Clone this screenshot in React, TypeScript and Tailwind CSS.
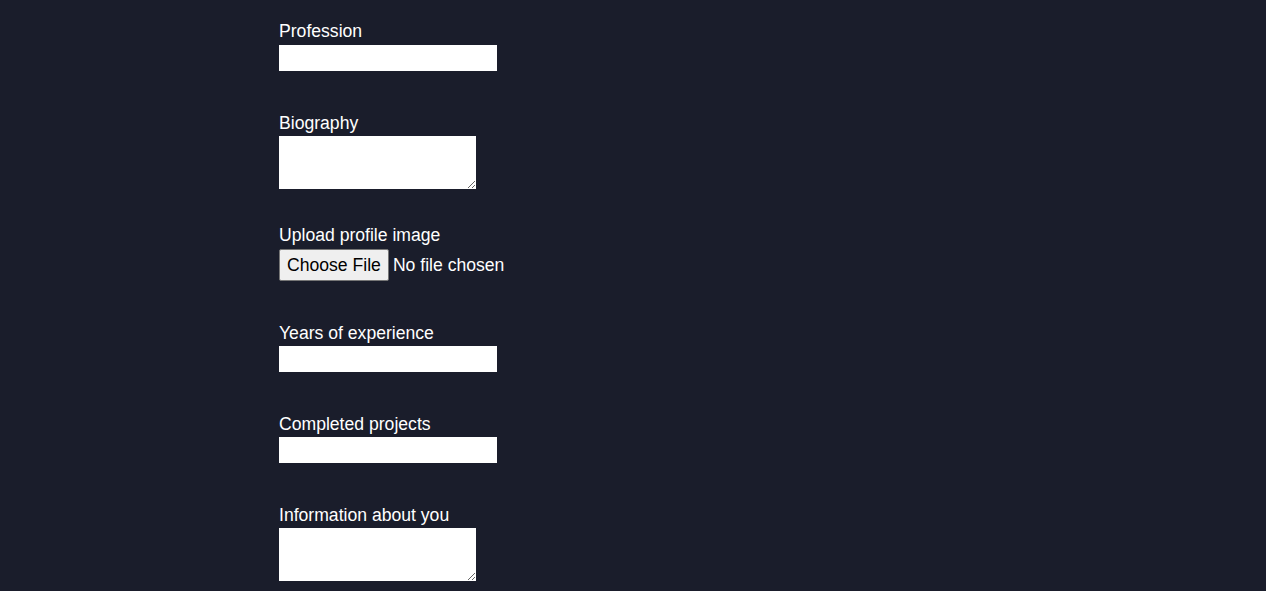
import type { ReactNode } from 'react';

const font = { fontFamily: '"Liberation Sans", Arial, sans-serif' };

function Field({ label, gap, top, children }: { label: string; gap: string; top: string; children: ReactNode }) {
    return (
        <div className={`flex flex-col items-start ${top}`}>
            <label className="block leading-[20px] text-white">{label}</label>
            <div className={gap}>{children}</div>
        </div>
    );
}

export default function App() {
    return (
        <div className="min-h-[591px] w-full bg-[#1a1d2b] text-[17.6px]" style={font}>
            <form className="mx-auto w-[708px] pt-[21px]">
                {/* Profession */}
                <Field label="Profession" gap="mt-[4px]" top="mt-0">
                    <input type="text" className="block h-[26px] w-[218px] bg-white text-black outline-none" />
                </Field>

                {/* Biography */}
                <Field label="Biography" gap="mt-[3px]" top="mt-[42px]">
                    <textarea className="block h-[53px] w-[197px] bg-white text-black outline-none" />
                </Field>

                {/* Profile image */}
                <Field label="Upload profile image" gap="mt-[4px]" top="mt-[36px]">
                    <input
                        type="file"
                        className="block h-[32px] text-white file:mr-[4px] file:h-[32px] file:rounded-[2px] file:border file:border-[#767676] file:bg-[#efefef] file:px-[7px] file:text-black"
                    />
                </Field>

                {/* Experience */}
                <Field label="Years of experience" gap="mt-[3px]" top="mt-[42px]">
                    <input type="text" className="block h-[26px] w-[218px] bg-white text-black outline-none" />
                </Field>

                <Field label="Completed projects" gap="mt-[3px]" top="mt-[42px]">
                    <input type="text" className="block h-[26px] w-[218px] bg-white text-black outline-none" />
                </Field>

                {/* About */}
                <Field label="Information about you" gap="mt-[3px]" top="mt-[42px]">
                    <textarea className="block h-[53px] w-[197px] bg-white text-black outline-none" />
                </Field>
            </form>
        </div>
    );
}
